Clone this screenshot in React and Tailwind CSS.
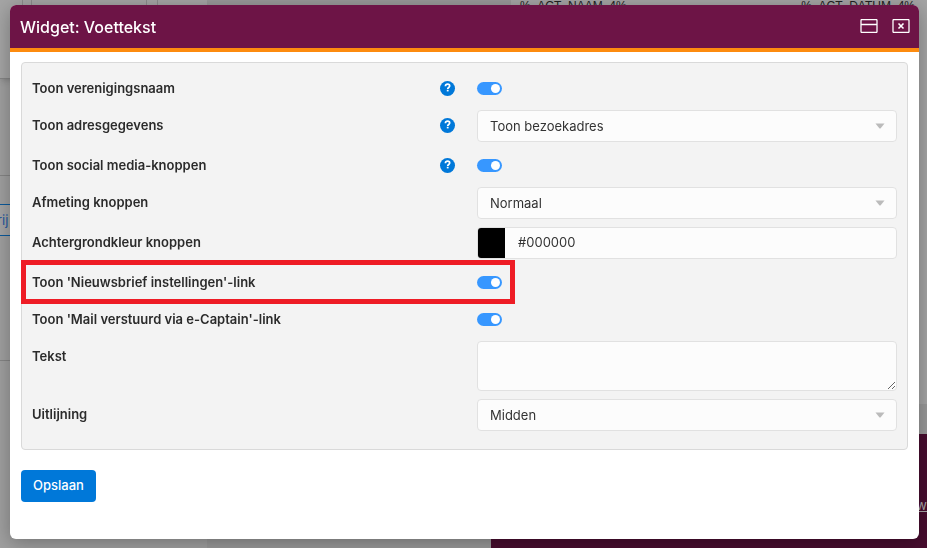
const HelpIcon = ({ title }) => (
  <button
    type="button"
    aria-label={`Uitleg: ${title}`}
    className="w-[15px] h-[15px] rounded-full bg-[#0078d9]"
  >
    <svg viewBox="0 0 15 15" className="w-full h-full" aria-hidden="true">
      <path
        d="M5.4 5.2C5.5 3.8 6.4 3.2 7.6 3.2s2.1.7 2.1 1.8c0 1.5-2 1.4-2 3"
        fill="none"
        stroke="#fff"
        strokeWidth="1.7"
      />
      <rect x="6.8" y="8.8" width="1.8" height="1.6" fill="#fff" />
    </svg>
  </button>
);

const Toggle = ({ id }) => (
  <div className="flex h-[29px] items-center pt-px">
    <input
      id={id}
      type="checkbox"
      role="switch"
      defaultChecked
      className="appearance-none w-[25px] h-[13px] rounded-full bg-gray-400 checked:bg-[#3797ff] flex items-center px-[2px] checked:justify-end before:w-[9px] before:h-[9px] before:rounded-full before:bg-white"
    />
  </div>
);

const Select = ({ id, options }) => (
  <div className="relative">
    <select
      id={id}
      className="appearance-none w-full h-8 rounded border border-[#e1e1e1] bg-[#fcfcfc] px-3 pt-[2px] text-[13px] text-[#333]"
    >
      {options.map((option) => (
        <option key={option}>{option}</option>
      ))}
    </select>
    <svg
      viewBox="0 0 10 6"
      className="absolute right-3 top-[13px] w-[10px] h-[6px] pointer-events-none"
      aria-hidden="true"
    >
      <path d="M0.5 0.5h9L5.5 5.5h-1z" fill="#bbb" />
    </svg>
  </div>
);

const Row = ({ id, label, help, highlight, children }) => (
  <div className="relative grid grid-cols-[445fr_420fr]">
    <div className="flex h-[31px] -mb-[2px] items-center justify-between pr-[22px]">
      <label htmlFor={id} className="text-[13px] font-semibold text-[#2b2b2b]">
        {label}
      </label>
      {help && <HelpIcon title={label} />}
    </div>
    {children}
    {highlight && (
      <div className="absolute -left-[11px] -top-[7px] w-[calc(51%+53px)] h-11 border-5 border-[#ee1c25] pointer-events-none" />
    )}
  </div>
);

const Backdrop = () => (
  <div className="fixed inset-0 flex overflow-hidden bg-[#999]" aria-hidden="true">
    <div className="w-[207px] bg-[#a0a0a0]">
      <div className="h-[79px] border-b border-[#858585] bg-[#a5a5a5] shadow-md flex">
        <div className="w-[23px] border-r border-[#8c8c8c]" />
        <div className="w-[9px] border-r border-[#8c8c8c]" />
        <div className="w-[115px] border-r border-[#8c8c8c]" />
        <div className="w-[11px] border-r border-[#8c8c8c]" />
      </div>
      <div className="h-[97px] border-b border-[#858585]" />
      <div className="h-7" />
      <div className="h-8 border-y border-[#0b5a9c] bg-[#a5a5a5] text-[13px] leading-[30px] text-[#2458a0]">
        <span className="-ml-[3px]">rij</span>
      </div>
      <div className="h-[125px] border-b border-[#858585]" />
    </div>
    <div className="flex-1 flex flex-col">
      <div className="h-[404px] ml-[304px] bg-[#a5a5a5] flex justify-between pl-[9px] pr-3 font-['Liberation_Sans'] text-xs leading-3 text-[#222]">
        <span>%_ACT_NAAM_4%</span>
        <span>%_ACT_DATUM_4%</span>
      </div>
      <div className="h-[30px]" />
      <div className="flex-1 ml-[284px] bg-[#480d2f] pt-[58px] text-right">
        <span className="text-[13px] text-[#aaa] underline">w</span>
      </div>
    </div>
  </div>
);

const App = () => {
  return (
    <div className="font-['Inter',sans-serif] min-h-screen">
      <Backdrop />
      <div className="relative px-[10px] pt-[5px] pr-2 pb-[9px]">
        <div
          role="dialog"
          aria-labelledby="dialog-title"
          className="rounded-md bg-white overflow-hidden shadow-[0_4px_20px_rgba(0,0,0,0.3)]"
        >
          <header className="flex h-[47px] items-center justify-between border-b-4 border-[#fd8b0f] bg-[#6d1446] pl-[10px] pr-[9px] text-white">
            <h1 id="dialog-title" className="text-base font-medium">
              Widget: Voettekst
            </h1>
            <div className="flex gap-[14px] pb-[2px]">
              <button type="button" aria-label="Minimaliseren">
                <svg viewBox="0 0 18 14" className="w-[18px] h-[14px]" fill="none" stroke="#fff">
                  <rect x="1" y="0.5" width="16" height="13" rx="1" strokeWidth="1.3" />
                  <path d="M1 5.5h16" strokeWidth="1.3" />
                </svg>
              </button>
              <button type="button" aria-label="Sluiten">
                <svg viewBox="0 0 18 14" className="w-[18px] h-[14px]" fill="none" stroke="#fff">
                  <rect x="1" y="0.5" width="16" height="13" rx="1" strokeWidth="1.3" />
                  <path d="M6.5 4.5l5 5M11.5 4.5l-5 5" strokeWidth="1.6" />
                </svg>
              </button>
            </div>
          </header>
          <form className="px-[11px] pt-[10px] pb-[37px]">
            <div className="flex flex-col gap-2 rounded border border-[#d9d9d9] bg-[#f3f3f3] px-[10px] pt-[10px] pb-[18px]">
              <Row id="name" label="Toon verenigingsnaam" help>
                <Toggle id="name" />
              </Row>
              <Row id="address" label="Toon adresgegevens" help>
                <Select id="address" options={['Toon bezoekadres', 'Toon postadres']} />
              </Row>
              <Row id="social" label="Toon social media-knoppen" help>
                <Toggle id="social" />
              </Row>
              <Row id="size" label="Afmeting knoppen">
                <Select id="size" options={['Normaal', 'Klein', 'Groot']} />
              </Row>
              <Row id="color" label="Achtergrondkleur knoppen">
                <div className="flex h-8 rounded border border-[#e1e1e1] bg-[#fcfcfc] overflow-hidden">
                  <span className="w-[27px] bg-black" />
                  <input
                    id="color"
                    type="text"
                    defaultValue="#000000"
                    className="flex-1 min-w-0 px-[13px] text-[13px] text-[#333]"
                  />
                </div>
              </Row>
              <Row id="newsletter" label="Toon 'Nieuwsbrief instellingen'-link" highlight>
                <Toggle id="newsletter" />
              </Row>
              <Row id="mail" label="Toon 'Mail verstuurd via e-Captain'-link">
                <Toggle id="mail" />
              </Row>
              <Row id="text" label="Tekst">
                <textarea
                  id="text"
                  className="block w-full h-[50px] rounded border border-[#e1e1e1] bg-[#fcfcfc] px-3 py-1 text-[13px] text-[#333]"
                />
              </Row>
              <Row id="align" label="Uitlijning">
                <Select id="align" options={['Midden', 'Links', 'Rechts']} />
              </Row>
            </div>
            <button
              type="submit"
              className="mt-5 h-8 rounded bg-[#0078d9] px-3 text-[13px] font-medium text-white"
            >
              Opslaan
            </button>
          </form>
        </div>
      </div>
    </div>
  );
};

export default App;
